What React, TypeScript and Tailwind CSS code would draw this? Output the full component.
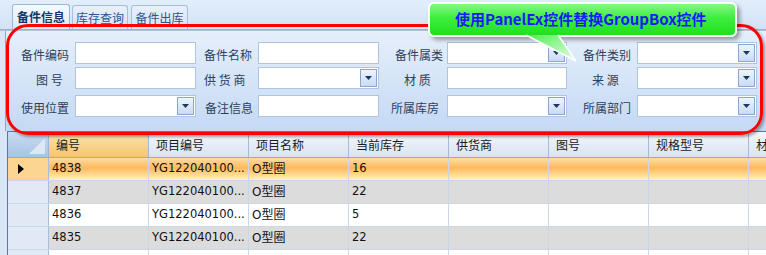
import React from "react";

type Field = { label: string; pad: string; drop?: boolean };

const formRows: Field[][] = [
  [
    { label: "备件编码", pad: "pl-0" },
    { label: "备件名称", pad: "pl-[8px]" },
    { label: "备件属类", pad: "pl-[16px]", drop: true },
    { label: "备件类别", pad: "pl-[16px]", drop: true },
  ],
  [
    { label: "图 号", pad: "pl-[15px]" },
    { label: "供 货 商", pad: "pl-[8px]", drop: true },
    { label: "材 质", pad: "pl-[25px]" },
    { label: "来 源", pad: "pl-[25px]", drop: true },
  ],
  [
    { label: "使用位置", pad: "pl-0", drop: true },
    { label: "备注信息", pad: "pl-[9px]" },
    { label: "所属库房", pad: "pl-[12px]", drop: true },
    { label: "所属部门", pad: "pl-[16px]", drop: true },
  ],
];

const labelWidths = ["w-[54px]", "w-[62px]", "w-[68px]", "w-[70px]"];
const inputWidths = ["w-[121px]", "w-[121px]", "w-[120px]", "w-[120px]"];

const columns = ["编号", "项目编号", "项目名称", "当前库存", "供货商", "图号", "规格型号", "材质"];

const rows = [
  { id: "4838", code: "YG122040100...", name: "O型圈", qty: "16" },
  { id: "4837", code: "YG122040100...", name: "O型圈", qty: "22" },
  { id: "4836", code: "YG122040100...", name: "O型圈", qty: "5" },
  { id: "4835", code: "YG122040100...", name: "O型圈", qty: "22" },
  { id: "", code: "", name: "", qty: "" },
];

function DropButton() {
  return (
    <div className="absolute right-[1px] top-[1px] bottom-[1px] w-[17px] border border-[#8aa6cc] bg-[linear-gradient(to_bottom,#eef4fc,#c9dbf3)] flex items-center justify-center">
      <svg width="7" height="4" viewBox="0 0 7 4">
        <polygon points="0,0 7,0 3.5,4" fill="#1c3866" />
      </svg>
    </div>
  );
}

function FormField({ f, i }: { f: Field; i: number }) {
  return (
    <>
      <div className={`${labelWidths[i]} ${f.pad} shrink-0 whitespace-pre text-[12px] text-[#2c3f5c] leading-none pt-[3px]`}>
        {f.label}
      </div>
      <div className={`${inputWidths[i]} shrink-0 h-[22px] relative bg-white border border-[#aec4e1]`}>
        {f.drop && <DropButton />}
      </div>
    </>
  );
}

export default function App() {
  return (
    <div className="w-[766px] h-[255px] relative overflow-hidden bg-[#d8e6f7] font-['Noto_Sans_CJK_SC',sans-serif]">
      {/* tab strip */}
      <div className="h-[29px] flex items-end pl-[12px] gap-[2px] bg-[linear-gradient(to_bottom,#e3eefb,#d2e2f6)]">
        <div className="w-[58px] h-[25px] rounded-t-[3px] border border-b-0 border-[#9bb6da] bg-[linear-gradient(to_bottom,#f6faff,#dde9f8)] flex items-center justify-center text-[12px] font-bold text-[#15376a]">
          备件信息
        </div>
        <div className="w-[56px] h-[24px] rounded-t-[3px] border border-b-0 border-[#a7bfdf] bg-[linear-gradient(to_bottom,#e8f0fb,#d4e3f6)] flex items-center justify-center text-[12px] text-[#2b5592]">
          库存查询
        </div>
        <div className="w-[57px] h-[24px] ml-[1px] rounded-t-[3px] border border-b-0 border-[#a7bfdf] bg-[linear-gradient(to_bottom,#e8f0fb,#d4e3f6)] flex items-center justify-center text-[12px] text-[#2b5592]">
          备件出库
        </div>
      </div>
      <div className="h-[2px] bg-[linear-gradient(to_bottom,#98a9c0,#b9c8da)]" />

      <div className="pl-[5px]">
        {/* PanelEx search area */}
        <div className="h-[100px] border-l border-[#8ea8c9] bg-[linear-gradient(to_bottom,#e6effb,#c4d9f4)] flex flex-col pt-[11px]">
          {formRows.map((r, ri) => (
            <div key={ri} className={`flex items-center pl-[15px] ${ri === 1 ? "mt-[3px]" : ri === 2 ? "mt-[6px]" : ""}`}>
              {r.map((f, i) => (
                <FormField key={i} f={f} i={i} />
              ))}
            </div>
          ))}
        </div>

        {/* data grid */}
        <div className="ml-[2px] border-l border-t border-[#5d7699] bg-white">
          <div className="flex h-[26px] border-b border-[#8facd2]">
            <div className="w-[41px] shrink-0 border-r border-[#9fb6d6] bg-[linear-gradient(to_bottom,#c9dbf2,#a9c3e6)] relative">
              <svg className="absolute right-[3px] bottom-[3px]" width="16" height="16" viewBox="0 0 16 16">
                <polygon points="16,0 16,16 0,16" fill="#dde8f6" />
              </svg>
            </div>
            {columns.map((c, i) => (
              <div
                key={c}
                className={`w-[100px] shrink-0 border-r border-[#a4b9d6] pl-[7px] flex items-center text-[12px] text-[#1a1a1a] whitespace-nowrap overflow-hidden ${
                  i === 0
                    ? "bg-[linear-gradient(to_bottom,#fde3b0,#f6c56f)]"
                    : "bg-[linear-gradient(to_bottom,#f4f7fc,#dae3f0)]"
                }`}
              >
                {c}
              </div>
            ))}
          </div>

          {rows.map((r, ri) => {
            const selected = ri === 0;
            const bg = selected
              ? "bg-[linear-gradient(to_bottom,#ffdca2,#ffb95f_45%,#ffe49e_85%,#fff1c6)]"
              : ri % 2 === 1
              ? "bg-[#dcdcdc]"
              : "bg-white";
            const cells = [r.id, r.code, r.name, r.qty, "", "", "", ""];
            return (
              <div key={ri} className={`flex h-[23px] border-b border-[#cbd7e8] ${bg}`}>
                <div
                  className={`w-[41px] shrink-0 border-r border-[#a9bedb] flex items-center pl-[10px] ${
                    selected ? "bg-[#fdd593]" : "bg-[#e1e9f5]"
                  }`}
                >
                  {selected && (
                    <svg width="6" height="10" viewBox="0 0 6 10">
                      <polygon points="0,0 6,5 0,10" fill="#000" />
                    </svg>
                  )}
                </div>
                {cells.map((v, ci) => (
                  <div
                    key={ci}
                    className={`w-[100px] shrink-0 border-r border-[#cbd7e8] pl-[3px] flex items-center text-[#111] whitespace-nowrap overflow-hidden font-['DejaVu_Sans','Noto_Sans_CJK_SC',sans-serif] ${
                      ci === 2 ? "text-[12px]" : "text-[11.5px]"
                    }`}
                  >
                    {v}
                  </div>
                ))}
              </div>
            );
          })}
        </div>
      </div>

      {/* annotation: red frame */}
      <div className="absolute left-[6px] top-[24px] w-[757px] h-[111px] rounded-[22px] border-[3px] border-[#ff0000] shadow-[2px_2px_3px_rgba(0,0,0,0.35)] pointer-events-none" />

      {/* annotation: callout */}
      <div className="absolute left-[428px] top-[2px] w-[309px] h-[35px] rounded-[6px] border-2 border-white bg-[linear-gradient(to_bottom,#86f786,#3dee3d_45%,#1fe01f)] shadow-[3px_3px_4px_rgba(0,0,0,0.35)] flex items-center pl-[25px] text-[15px] font-bold text-[#1a1aff] whitespace-nowrap">
        使用PanelEx控件替换GroupBox控件
      </div>
      <svg className="absolute left-[520px] top-[30px]" width="62" height="36" viewBox="0 0 62 36">
        <defs>
          <linearGradient id="tail" x1="0" y1="0" x2="1" y2="1">
            <stop offset="0" stopColor="#4eee4e" />
            <stop offset="1" stopColor="#e9fde9" />
          </linearGradient>
        </defs>
        <polygon points="6,5 38,5 56,31" fill="url(#tail)" />
        <polyline points="6,5 56,31 38,5" fill="none" stroke="#ffffff" strokeWidth="1.5" />
      </svg>
    </div>
  );
}
